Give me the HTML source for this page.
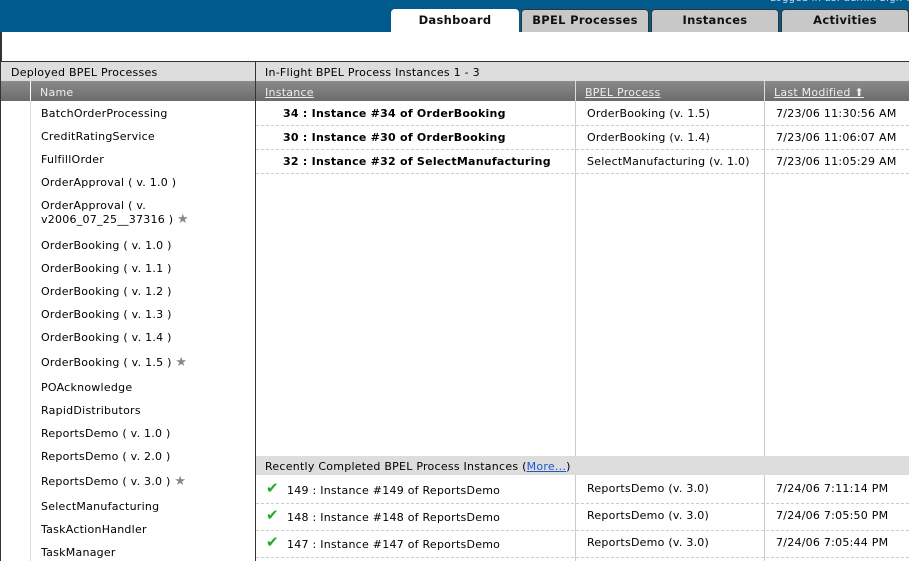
<!DOCTYPE html>
<html><head><style>
*{margin:0;padding:0;box-sizing:border-box}
body{width:909px;height:561px;overflow:hidden;background:#fff;font-family:"DejaVu Sans","Liberation Sans",sans-serif;font-size:11px;color:#000;position:relative}
.a{position:absolute;white-space:nowrap;line-height:14px;letter-spacing:0.25px}
.tab{position:absolute;top:9px;height:23px;width:128px;background:#c8c8c8;border:1px solid #333;border-bottom:none;border-radius:4px 4px 0 0;text-align:center;font-weight:bold;font-size:11.5px;line-height:21px;color:#111;letter-spacing:0.3px}
.dash{position:absolute;height:0;border-top:1px dashed #ccc}
.vl{position:absolute;width:1px;background:#ccc}
.s{color:#888;font-size:13px}
.ck{position:absolute;color:#2a2;font-size:15px;font-weight:bold;line-height:15px}
</style></head><body>
<div class="a" style="left:0;top:0;width:909px;height:32px;background:#005a8c"></div>
<div class="a" style="left:770px;top:-8px;color:#cde;font-size:10px">Logged in as: admin  Sign out</div>
<div class="tab" style="left:391px;background:#fff;border-color:#fff">Dashboard</div>
<div class="tab" style="left:521px">BPEL Processes</div>
<div class="tab" style="left:651px">Instances</div>
<div class="tab" style="left:781px">Activities</div>
<div class="a" style="left:0;top:32px;width:2px;height:30px;background:#333"></div>
<div class="a" style="left:0;top:61px;width:909px;height:1px;background:#333"></div>
<div class="a" style="left:0;top:62px;width:909px;height:19px;background:#ddd"></div>
<div class="a" style="left:11px;top:66px">Deployed BPEL Processes</div>
<div class="a" style="left:265px;top:66px">In-Flight BPEL Process Instances 1 - 3</div>
<div class="a" style="left:0;top:81px;width:909px;height:20px;background:linear-gradient(#8a8a8a,#6c6c6c)"></div>
<div class="a" style="left:30px;top:81px;width:1px;height:480px;background:#ddd"></div>
<div class="a" style="left:30px;top:81px;width:1px;height:20px;background:#fff"></div>
<div class="a" style="left:40px;top:86px;color:#eee">Name</div>
<div class="a" style="left:265px;top:86px;color:#eee;text-decoration:underline">Instance</div>
<div class="a" style="left:585px;top:86px;color:#eee;text-decoration:underline">BPEL Process</div>
<div class="a" style="left:774px;top:86px;color:#eee;text-decoration:underline">Last Modified ⬆</div>
<div class="a" style="left:575px;top:81px;width:1px;height:20px;background:#ddd"></div>
<div class="a" style="left:764px;top:81px;width:1px;height:20px;background:#ddd"></div>
<div class="a" style="left:255px;top:62px;width:1px;height:499px;background:#333"></div>
<div class="a" style="left:0;top:62px;width:1px;height:499px;background:#333"></div>
<div class="vl" style="left:575px;top:101px;height:355px"></div>
<div class="vl" style="left:764px;top:101px;height:355px"></div>
<div class="vl" style="left:575px;top:475px;height:86px"></div>
<div class="vl" style="left:764px;top:475px;height:86px"></div>

<div class="a" style="left:41px;top:107px">BatchOrderProcessing</div>
<div class="a" style="left:41px;top:130px">CreditRatingService</div>
<div class="a" style="left:41px;top:153px">FulfillOrder</div>
<div class="a" style="left:41px;top:176px">OrderApproval ( v. 1.0 )</div>
<div class="a" style="left:41px;top:199px">OrderApproval ( v.</div>
<div class="a" style="left:41px;top:213px">v2006_07_25__37316 ) <span class="s">★</span></div>
<div class="a" style="left:41px;top:239px">OrderBooking ( v. 1.0 )</div>
<div class="a" style="left:41px;top:262px">OrderBooking ( v. 1.1 )</div>
<div class="a" style="left:41px;top:285px">OrderBooking ( v. 1.2 )</div>
<div class="a" style="left:41px;top:308px">OrderBooking ( v. 1.3 )</div>
<div class="a" style="left:41px;top:331px">OrderBooking ( v. 1.4 )</div>
<div class="a" style="left:41px;top:356px">OrderBooking ( v. 1.5 ) <span class="s">★</span></div>
<div class="a" style="left:41px;top:381px">POAcknowledge</div>
<div class="a" style="left:41px;top:404px">RapidDistributors</div>
<div class="a" style="left:41px;top:427px">ReportsDemo ( v. 1.0 )</div>
<div class="a" style="left:41px;top:450px">ReportsDemo ( v. 2.0 )</div>
<div class="a" style="left:41px;top:475px">ReportsDemo ( v. 3.0 ) <span class="s">★</span></div>
<div class="a" style="left:41px;top:500px">SelectManufacturing</div>
<div class="a" style="left:41px;top:523px">TaskActionHandler</div>
<div class="a" style="left:41px;top:546px">TaskManager</div>

<div class="a" style="left:283px;top:107px;font-weight:bold">34 : Instance #34 of OrderBooking</div>
<div class="a" style="left:283px;top:131px;font-weight:bold">30 : Instance #30 of OrderBooking</div>
<div class="a" style="left:283px;top:155px;font-weight:bold">32 : Instance #32 of SelectManufacturing</div>
<div class="a" style="left:587px;top:107px">OrderBooking (v. 1.5)</div>
<div class="a" style="left:587px;top:131px">OrderBooking (v. 1.4)</div>
<div class="a" style="left:587px;top:155px">SelectManufacturing (v. 1.0)</div>
<div class="a" style="left:776px;top:107px">7/23/06 11:30:56 AM</div>
<div class="a" style="left:776px;top:131px">7/23/06 11:06:07 AM</div>
<div class="a" style="left:776px;top:155px">7/23/06 11:05:29 AM</div>
<div class="dash" style="left:256px;top:125px;width:653px"></div>
<div class="dash" style="left:256px;top:149px;width:653px"></div>
<div class="dash" style="left:256px;top:173px;width:653px"></div>

<div class="a" style="left:256px;top:456px;width:653px;height:19px;background:#ddd"></div>
<div class="a" style="left:265px;top:460px">Recently Completed BPEL Process Instances (<span style="color:#2255cc;text-decoration:underline">More...</span>)</div>
<div class="ck" style="left:266px;top:481px">✔</div>
<div class="ck" style="left:266px;top:508px">✔</div>
<div class="ck" style="left:266px;top:535px">✔</div>
<div class="a" style="left:287px;top:484px">149 : Instance #149 of ReportsDemo</div>
<div class="a" style="left:287px;top:511px">148 : Instance #148 of ReportsDemo</div>
<div class="a" style="left:287px;top:538px">147 : Instance #147 of ReportsDemo</div>
<div class="a" style="left:587px;top:482px">ReportsDemo (v. 3.0)</div>
<div class="a" style="left:587px;top:509px">ReportsDemo (v. 3.0)</div>
<div class="a" style="left:587px;top:536px">ReportsDemo (v. 3.0)</div>
<div class="a" style="left:776px;top:482px">7/24/06 7:11:14 PM</div>
<div class="a" style="left:776px;top:509px">7/24/06 7:05:50 PM</div>
<div class="a" style="left:776px;top:536px">7/24/06 7:05:44 PM</div>
<div class="dash" style="left:256px;top:503px;width:653px"></div>
<div class="dash" style="left:256px;top:530px;width:653px"></div>
<div class="dash" style="left:256px;top:557px;width:653px"></div>
</body></html>
